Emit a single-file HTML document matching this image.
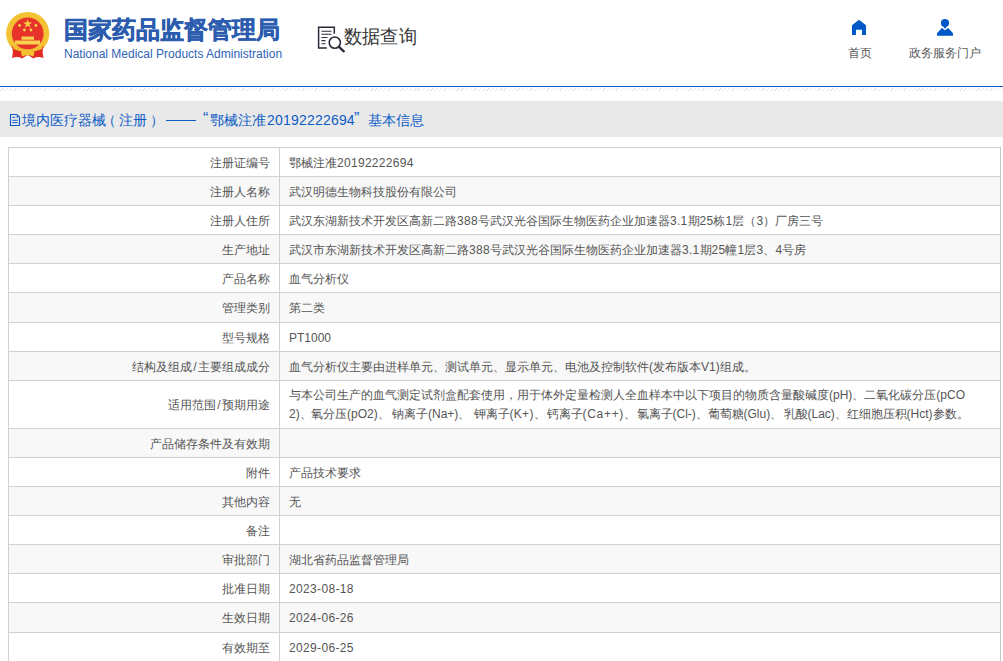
<!DOCTYPE html>
<html><head><meta charset="utf-8">
<style>
*{margin:0;padding:0;box-sizing:border-box}
html,body{width:1003px;height:661px;overflow:hidden;background:#fff}
body{position:relative;font-family:"Liberation Sans",sans-serif;color:#333}
.abs{position:absolute;white-space:nowrap}
#blue{position:absolute;left:0;top:86px;width:1003px;height:1px;background:#0a5bc4}
#hatch{position:absolute;left:0;top:88px;width:1003px;height:3px;background:repeating-linear-gradient(135deg,#fff 0,#fff 2.1px,#e8e8e8 2.1px,#e8e8e8 3.04px)}
#band{position:absolute;left:0;top:101px;width:1003px;height:36px;background:#e9e9e9}
.title{position:absolute;top:110px;font-size:14px;line-height:20px;color:#0b5cc6;white-space:nowrap}
.hl{position:absolute;background:#d2d2d2;height:1px}
.vl{position:absolute;background:#d2d2d2;width:1px}
.row{position:absolute;left:9px;width:991px}
.alt{background:#f8f8f8}
.lab{position:absolute;right:733px;font-size:12px;line-height:16px;color:#555;white-space:nowrap;text-align:right}
.val{position:absolute;left:289px;font-size:12px;line-height:16px;color:#555;white-space:nowrap}
</style></head><body>
<!-- emblem -->
<svg class="abs" style="left:0;top:0" width="60" height="64" viewBox="0 0 60 64">
  <circle cx="27.7" cy="33.5" r="21.6" fill="#f3c233"/>
  <circle cx="27.7" cy="33.5" r="15.9" fill="#e8332a"/>
  <path d="M27.7 19.3 l1.05 3.2 3.35 0 -2.7 1.95 1.05 3.2 -2.75 -2 -2.75 2 1.05 -3.2 -2.7 -1.95 3.35 0z" fill="#f7d548"/>
  <circle cx="19.6" cy="25.5" r="1.4" fill="#f7d548"/>
  <circle cx="35.9" cy="25.5" r="1.4" fill="#f7d548"/>
  <circle cx="24.4" cy="30" r="1.4" fill="#f7d548"/>
  <circle cx="31" cy="30" r="1.4" fill="#f7d548"/>
  <path d="M21.5 36.6 h12.5 v3.2 h-12.5z M15 40.6 h25 v4 h-25z" fill="#f6d24e"/>
  <path d="M11.5 46 Q14 50 12 58 Q18 56 22 58.5 L27.7 55 L33.5 58.5 Q37.5 56 43.5 58 Q41.5 50 44 46 Q35 50 27.7 50 Q20 50 11.5 46Z" fill="#e02a22"/>
  <path d="M13 46.5 Q27.7 53 42.5 46.5 L42 49 Q27.7 55.5 13.5 49 Z" fill="#f3c233"/>
  <path d="M21 51.5 Q27.7 48.5 34.5 51.5 L33.5 56.5 Q27.7 54 22 56.5 Z" fill="#f3c233"/>
</svg>
<div class="abs" style="left:64px;top:15px;font-size:24px;line-height:30px;font-weight:900;color:#2b5cae;-webkit-text-stroke:0.5px #2b5cae">国家药品监督管理局</div>
<div class="abs" style="left:64px;top:47px;font-size:12px;line-height:14px;color:#2f63b5">National Medical Products Administration</div>
<!-- data query icon -->
<svg class="abs" style="left:316px;top:24px" width="32" height="30" viewBox="0 0 32 30">
  <path d="M10.8 23.9 H2.6 V3.3 H18.3 V9.8" fill="none" stroke="#2a2a38" stroke-width="1.5"/>
  <path d="M5.5 7.2h10 M5.5 10.3h10 M5.5 13.5h6 M5.5 16.6h4 M5.5 19.8h4" stroke="#2a2a38" stroke-width="1.1"/>
  <circle cx="18.8" cy="18.6" r="5.6" fill="none" stroke="#2a2a38" stroke-width="1.6"/>
  <path d="M23 22.8 L27.8 27.3" stroke="#2a2a38" stroke-width="2.3" stroke-linecap="round"/>
</svg>
<div class="abs" style="left:344px;top:25px;font-size:19px;line-height:24px;color:#333;transform:scaleX(0.96);transform-origin:0 0">数据查询</div>
<!-- nav -->
<svg class="abs" style="left:0;top:0" width="1003" height="40" viewBox="0 0 1003 40">
  <path d="M852 35 V25.3 L859 19.8 L866 25.3 V35 H862 V29.7 H856 V35 Z" fill="#0059c6"/>
  <circle cx="945" cy="23" r="4.1" fill="#0059c6"/>
  <path d="M945 25 L946.5 28.3 L943.5 28.3Z" fill="#0059c6"/>
  <path d="M937 35.8 V33.2 L941.8 28 L945 30.3 L948.2 28 L953 33.2 V35.8 Z" fill="#0059c6"/>
</svg>
<div class="abs" style="left:848px;top:45px;font-size:12px;line-height:16px;color:#555">首页</div>
<div class="abs" style="left:909px;top:45px;font-size:12px;line-height:16px;color:#555">政务服务门户</div>

<div id="blue"></div>
<div id="hatch"></div>
<div id="band"></div>
<svg class="abs" style="left:9px;top:113px" width="13" height="14" viewBox="0 0 13 14">
  <path d="M1.5 1.5 H7.8 L10.5 4.2 V12.5 H1.5 Z" fill="none" stroke="#0b5cc6" stroke-width="1.15"/>
  <circle cx="8.3" cy="3.9" r="0.8" fill="#0b5cc6"/>
  <path d="M3.3 4.3h3 M3.3 7.3h5.4 M3.3 9.6h5.4" stroke="#0b5cc6" stroke-width="1"/>
</svg>
<div class="title" style="left:22px">境内医疗器械</div>
<div class="title" style="left:102px">（</div>
<div class="title" style="left:119px">注册</div>
<div class="title" style="left:150px">）</div>
<div class="abs" style="left:166px;top:120px;width:30px;height:1px;background:#0b5cc6"></div>
<div class="title" style="left:203px;font-size:16px;top:109px">“</div>
<div class="title" style="left:210px">鄂械注准</div>
<div class="title" style="left:267px;letter-spacing:0.2px">20192222694</div>
<div class="title" style="left:354px;font-size:16px;top:109px">”</div>
<div class="title" style="left:368px">基本信息</div>

<!--TABLE-->
<div class="abs alt" style="left:9px;top:177px;width:991px;height:28px"></div>
<div class="abs alt" style="left:9px;top:235px;width:991px;height:28px"></div>
<div class="abs alt" style="left:9px;top:293px;width:991px;height:29px"></div>
<div class="abs alt" style="left:9px;top:352px;width:991px;height:28px"></div>
<div class="abs alt" style="left:9px;top:429px;width:991px;height:28px"></div>
<div class="abs alt" style="left:9px;top:487px;width:991px;height:28px"></div>
<div class="abs alt" style="left:9px;top:545px;width:991px;height:28px"></div>
<div class="abs alt" style="left:9px;top:603px;width:991px;height:29px"></div>
<div class="hl" style="left:8px;top:147px;width:992px"></div>
<div class="hl" style="left:8px;top:176px;width:992px"></div>
<div class="hl" style="left:8px;top:205px;width:992px"></div>
<div class="hl" style="left:8px;top:234px;width:992px"></div>
<div class="hl" style="left:8px;top:263px;width:992px"></div>
<div class="hl" style="left:8px;top:292px;width:992px"></div>
<div class="hl" style="left:8px;top:322px;width:992px"></div>
<div class="hl" style="left:8px;top:351px;width:992px"></div>
<div class="hl" style="left:8px;top:380px;width:992px"></div>
<div class="hl" style="left:8px;top:428px;width:992px"></div>
<div class="hl" style="left:8px;top:457px;width:992px"></div>
<div class="hl" style="left:8px;top:486px;width:992px"></div>
<div class="hl" style="left:8px;top:515px;width:992px"></div>
<div class="hl" style="left:8px;top:544px;width:992px"></div>
<div class="hl" style="left:8px;top:573px;width:992px"></div>
<div class="hl" style="left:8px;top:602px;width:992px"></div>
<div class="hl" style="left:8px;top:632px;width:992px"></div>
<div class="vl" style="left:8px;top:147px;height:514px"></div>
<div class="vl" style="left:279px;top:147px;height:514px"></div>
<div class="vl" style="left:1000px;top:147px;height:514px;background:#c6c6c6"></div>
<div class="lab" style="top:155px">注册证编号</div>
<div class="val" style="top:155px">鄂械注准<span style="letter-spacing:0.3px">20192222694</span></div>
<div class="lab" style="top:184px">注册人名称</div>
<div class="val" style="top:184px">武汉明德生物科技股份有限公司</div>
<div class="lab" style="top:213px">注册人住所</div>
<div class="val" style="top:213px">武汉东湖新技术开发区高新二路<span style="letter-spacing:0.3px">388</span>号武汉光谷国际生物医药企业加速器<span style="letter-spacing:0.3px">3.1</span>期<span style="letter-spacing:0.3px">25</span>栋<span style="letter-spacing:0.3px">1</span>层（<span style="letter-spacing:0.3px">3</span>）厂房三号</div>
<div class="lab" style="top:242px">生产地址</div>
<div class="val" style="top:242px">武汉市东湖新技术开发区高新二路<span style="letter-spacing:0.3px">388</span>号武汉光谷国际生物医药企业加速器<span style="letter-spacing:0.3px">3.1</span>期<span style="letter-spacing:0.3px">25</span>幢<span style="letter-spacing:0.3px">1</span>层<span style="letter-spacing:0.3px">3</span>、<span style="letter-spacing:0.3px">4</span>号房</div>
<div class="lab" style="top:271px">产品名称</div>
<div class="val" style="top:271px">血气分析仪</div>
<div class="lab" style="top:300px">管理类别</div>
<div class="val" style="top:300px">第二类</div>
<div class="lab" style="top:330px">型号规格</div>
<div class="val" style="top:330px">PT1000</div>
<div class="lab" style="top:359px">结构及组成<span style="margin:0 1.4px">/</span>主要组成成分</div>
<div class="val" style="top:359px">血气分析仪主要由进样单元、测试单元、显示单元、电池及控制软件(发布版本V1)组成。</div>
<div class="lab" style="top:397px">适用范围<span style="margin:0 1.4px">/</span>预期用途</div>
<div class="val" style="top:387px">与本公司生产的血气测定试剂盒配套使用，用于体外定量检测人全血样本中以下项目的物质含量</div>
<div class="val" style="top:387px;left:789px">：</div>
<div class="val" style="top:387px;left:793px">酸碱度(pH)、二氧化碳分压(pCO</div>
<div class="val" style="top:406px;left:289px">2)、</div>
<div class="val" style="top:406px;left:311px">氧分压(pO2)、</div>
<div class="val" style="top:406px;left:392px">钠离子(Na+)、</div>
<div class="val" style="top:406px;left:473.5px">钾离子<span style="letter-spacing:0.3px">(K+)</span>、</div>
<div class="val" style="top:406px;left:546.5px">钙离子<span style="letter-spacing:0.7px">(Ca++)</span>、</div>
<div class="val" style="top:406px;left:636.5px">氯离子(Cl-)、</div>
<div class="val" style="top:406px;left:707.5px">葡萄糖(Glu)、</div>
<div class="val" style="top:406px;left:783.5px">乳酸(Lac)、</div>
<div class="val" style="top:406px;left:846.5px">红细胞压积(Hct)</div>
<div class="val" style="top:406px;left:933px">参数。</div>
<div class="lab" style="top:436px">产品储存条件及有效期</div>
<div class="lab" style="top:465px">附件</div>
<div class="val" style="top:465px">产品技术要求</div>
<div class="lab" style="top:494px">其他内容</div>
<div class="val" style="top:494px">无</div>
<div class="lab" style="top:523px">备注</div>
<div class="lab" style="top:552px">审批部门</div>
<div class="val" style="top:552px">湖北省药品监督管理局</div>
<div class="lab" style="top:581px">批准日期</div>
<div class="val" style="top:581px;letter-spacing:0.35px">2023-08-18</div>
<div class="lab" style="top:610px">生效日期</div>
<div class="val" style="top:610px;letter-spacing:0.35px">2024-06-26</div>
<div class="lab" style="top:640px">有效期至</div>
<div class="val" style="top:640px;letter-spacing:0.35px">2029-06-25</div>
<!--/TABLE-->
</body></html>
